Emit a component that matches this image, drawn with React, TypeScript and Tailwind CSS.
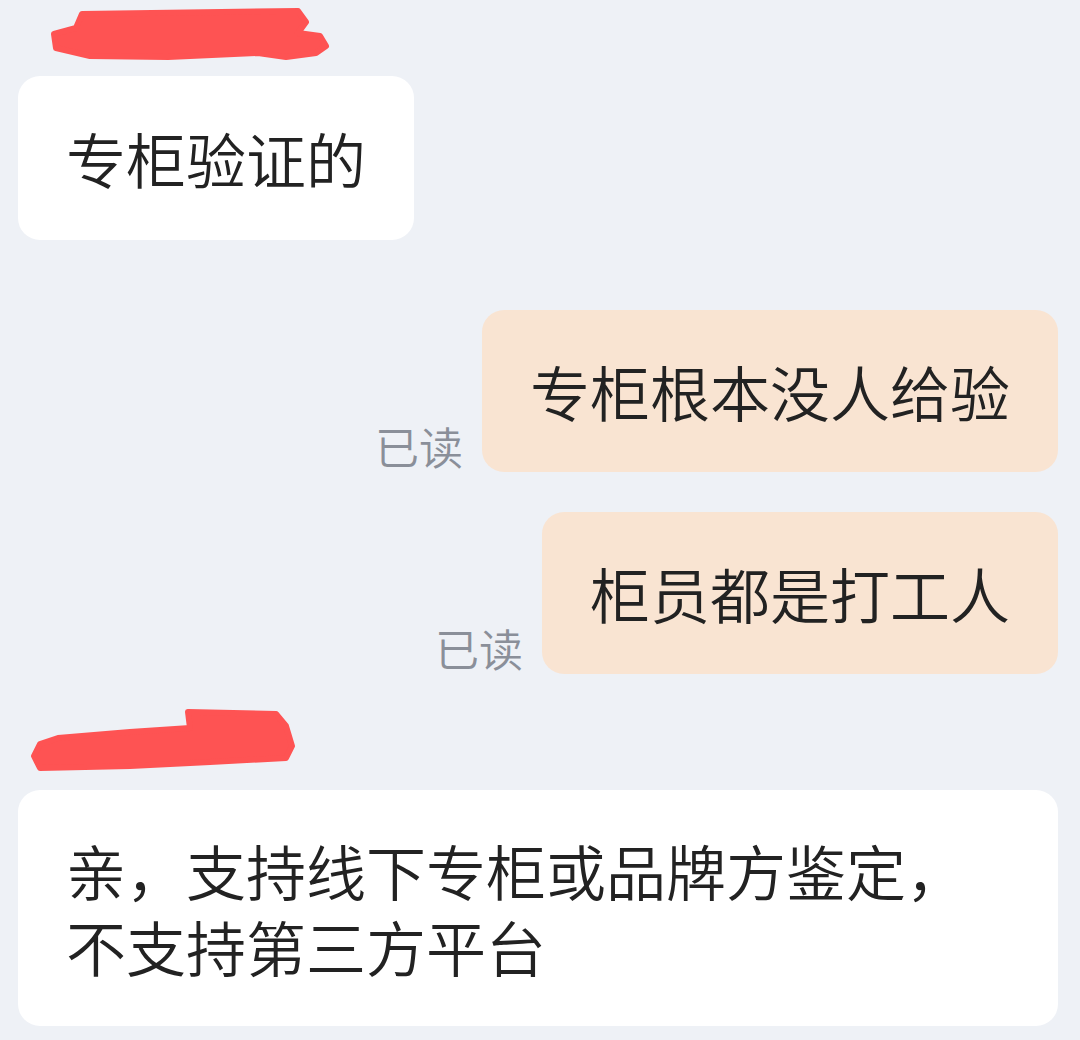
const font = { fontFamily: '"Noto Sans CJK SC", "Noto Sans", sans-serif' }

function Scribble({ variant }: { variant: 1 | 2 }) {
  if (variant === 1) {
    return (
      <svg width="320" height="64" viewBox="0 0 320 64" className="block">
        <path
          d="M64 12 L280 9 L288 20 L280 31 L302 34 L308 44 L298 51 L268 55 L240 51 L150 55 L72 54 L38 46 L36 32 L58 26 Z"
          fill="#fe5353"
          stroke="#fe5353"
          strokeWidth="6"
          strokeLinejoin="round"
        />
      </svg>
    )
  }
  return (
    <svg width="300" height="70" viewBox="0 0 300 70" className="block">
      <path
        d="M178 6 L266 8 L276 20 L282 40 L276 52 L200 56 L120 60 L30 62 L24 50 L30 38 L48 32 L120 26 L180 22 Z"
        fill="#fe5353"
        stroke="#fe5353"
        strokeWidth="6"
        strokeLinejoin="round"
      />
    </svg>
  )
}

function Incoming({ children }: { children: React.ReactNode }) {
  return (
    <div className="flex">
      <div className="bg-white rounded-[22px] px-[48px] py-[44px] text-[60px] leading-[76px] text-[#222222] font-[350]">
        {children}
      </div>
    </div>
  )
}

function Outgoing({ text }: { text: string }) {
  return (
    <div className="flex justify-end items-end gap-[19px]">
      <span className="text-[44px] leading-[52px] text-[#8a8f99] font-[350]">已读</span>
      <div className="bg-[#f9e4d2] rounded-[22px] px-[48px] py-[43px] text-[60px] leading-[76px] text-[#222222] font-[350]">
        {text}
      </div>
    </div>
  )
}

export default function App() {
  return (
    <main className="w-[1080px] h-[1040px] bg-[#eef1f6] overflow-hidden pl-[18px] pr-[22px]" style={font}>
      <div className="pt-[2px] h-[76px]">
        <Scribble variant={1} />
      </div>
      <Incoming>专柜验证的</Incoming>
      <div className="mt-[70px] flex flex-col gap-[40px]">
        <Outgoing text="专柜根本没人给验" />
        <Outgoing text="柜员都是打工人" />
      </div>
      <div className="mt-[32px] h-[84px] -ml-[8px]">
        <Scribble variant={2} />
      </div>
      <div className="bg-white rounded-[22px] px-[48px] py-[42px] text-[60px] leading-[76px] text-[#222222] font-[350]">
        <div>亲，支持线下专柜或品牌方鉴定，</div>
        <div>不支持第三方平台</div>
      </div>
    </main>
  )
}
